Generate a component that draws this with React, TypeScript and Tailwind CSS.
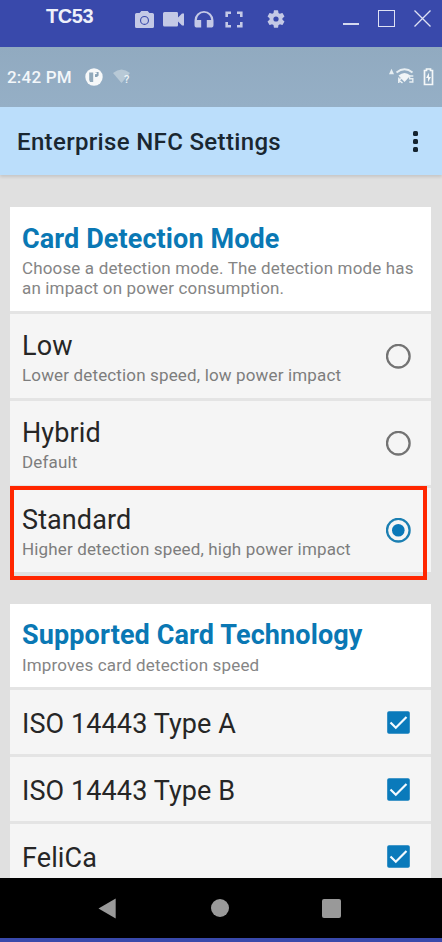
import React from "react";

const ROBOTO = "font-['Roboto','Liberation_Sans',sans-serif]";

function TitleBar() {
  return (
    <header className="flex h-[47px] shrink-0 items-start bg-[#3949ab] text-[#c4c9e6]">
      <h1 className="ml-[46px] mt-[4px] w-[89px] font-['Liberation_Sans',Arial,sans-serif] text-[20px] font-bold leading-[24px] tracking-[-0.4px] text-[#eef0fa]">
        TC53
      </h1>
      <svg className="mt-[11px] h-[17px] w-[19px]" viewBox="0 0 19 17" fill="currentColor">
        <path fillRule="evenodd" d="M6.3 0h6.4l1.7 2h3A1.6 1.6 0 0 1 19 3.600v11.800a1.600 1.600 0 0 1-1.600 1.600H1.600A1.600 1.600 0 0 1 0 15.400V3.600A1.600 1.600 0 0 1 1.600 2h3zM9.500 4.900a4.500 4.500 0 1 0 0 9a4.500 4.500 0 0 0 0-9zm0 1.100a3.400 3.400 0 1 1 0 6.800a3.400 3.400 0 0 1 0-6.800z" />
      </svg>
      <svg className="ml-[9px] mt-[12px] h-[15px] w-[21px]" viewBox="0 0 21 15" fill="currentColor">
        <path d="M1.500 0h12.200Q15 0 15 1.400v4L19 1.400h2v12.200h-2L15 9.600v3.600q0 1.300-1.300 1.300H1.500Q0 14.500 0 13V1.500Q0 0 1.500 0z" />
      </svg>
      <svg className="ml-[10px] mt-[11px] h-[17px] w-[20px]" viewBox="0 0 20 17" fill="currentColor">
        <path d="M10 0a9.500 9.500 0 0 0-9.500 9.500v4.400A2.700 2.700 0 0 0 3.200 16.600h4V9H2.800a7.200 7.200 0 0 1 14.400 0h-4.400v7.600h4a2.700 2.700 0 0 0 2.700-2.700V9.500A9.500 9.500 0 0 0 10 0z" />
      </svg>
      <svg className="ml-[11px] mt-[11px] h-[17px] w-[18px]" viewBox="0 0 18 17" fill="none" stroke="currentColor" strokeWidth="2.6">
        <path d="M1.700 6V1.700H6M12 1.700h4.300V6M16.300 11v4.300H12M6 15.300H1.700V11" />
      </svg>
      <svg className="ml-[24px] mt-[10px] h-[18px] w-[18px]" viewBox="2.200 2 19.600 20" fill="currentColor">
        <path d="M19.140 12.940c.040-.3.060-.61.060-.94 0-.32-.020-.64-.070-.94l2.030-1.580a.49.49 0 0 0 .12-.61l-1.920-3.320a.488.488 0 0 0-.59-.22l-2.390.96c-.5-.38-1.030-.7-1.620-.94l-.36-2.540a.484.484 0 0 0-.48-.41h-3.840c-.24 0-.43.17-.47.41l-.36 2.540c-.59.24-1.130.57-1.620.94l-2.390-.96c-.22-.080-.47 0-.59.22L2.740 8.870c-.12.21-.080.47.12.61l2.030 1.580c-.050.3-.090.63-.090.94s.020.64.070.94l-2.030 1.580a.49.49 0 0 0-.12.61l1.920 3.320c.12.22.37.29.59.22l2.390-.96c.5.38 1.030.7 1.620.94l.36 2.540c.050.24.24.41.48.41h3.840c.24 0 .44-.17.47-.41l.36-2.540c.59-.24 1.130-.56 1.620-.94l2.390.96c.22.080.47 0 .59-.22l1.920-3.320c.12-.22.070-.47-.12-.61l-2.010-1.580zM12 14.900a2.900 2.900 0 1 1 0-5.800a2.900 2.900 0 0 1 0 5.800z" />
      </svg>
      <div className="ml-[58px] mt-[23px] h-[2px] w-[16px] bg-[#d5d9ef]" />
      <div className="ml-[19px] mt-[10px] h-[17px] w-[17px] border border-[#dfe2f4]" />
      <svg className="ml-[19px] mt-[10px] h-[17px] w-[17px]" viewBox="0 0 17 17" stroke="#dfe2f4" strokeWidth="1.300">
        <path d="M.500.500l16 16M16.500.500l-16 16" />
      </svg>
    </header>
  );
}

function StatusBar() {
  return (
    <div className="flex h-[60px] shrink-0 items-start bg-linear-to-b from-[#91aac0] to-[#95afc6] text-[#f3f7fa]">
      <span className="ml-[7px] mt-[20px] w-[78px] whitespace-nowrap text-[17px] font-medium leading-[20px] tracking-[0.2px]">2:42 PM</span>
      <svg className="mt-[21px] h-[18px] w-[18px]" viewBox="0 0 18 18">
        <circle cx="9" cy="9" r="8.700" fill="#f6f8f9" />
        <path d="M4.200 4.500h4v9.500h-3.200l-.8-2z" fill="#91a9bb" />
        <path d="M10 4h3.600v3.500L12 9h-2z" fill="#8ba4b7" />
        <circle cx="10.800" cy="5.200" r="1" fill="#fff" />
      </svg>
      <svg className="ml-[10px] mt-[22px] h-[16px] w-[18px]" viewBox="0 0 18 16">
        <path d="M0 4Q8.500-3 17 4L8.500 14z" fill="#b8c9d6" />
        <text x="11" y="14" fontSize="11" fontWeight="500" fill="#eef4f7">?</text>
      </svg>
      <svg className="ml-[256px] mt-[21px] h-[18px] w-[29px]" viewBox="0 0 29 18">
        <path d="M2 6.300L4.500.800L7 6.300z" fill="#e7eef2" />
        <path d="M9.500 4.500Q17.500-2 25.500 4.500" fill="none" stroke="#e7eef2" strokeWidth="1.800" />
        <path d="M11.500 7.500Q17.500 2.500 23.500 7.500L17.500 14z" fill="#f1f5f7" />
        <path d="M11.800 9.500v5.500M15.500 9.500l-3.500 2.700 3.500 2.800" fill="none" stroke="#eef3f6" strokeWidth="1.400" />
        <path d="M26.300 8h-3.700v2.700h3.200v3.300h-3.500" fill="none" stroke="#e7eef2" strokeWidth="1.400" />
      </svg>
      <svg className="ml-[7px] mt-[21px] h-[18px] w-[11px]" viewBox="0 0 11 18">
        <path d="M3.500 1h4v1.500h2v14h-8v-14h2z" fill="none" stroke="#f4f7f8" strokeWidth="1.700" />
        <path d="M6 4.800L3 10h2v4l3-5H6z" fill="#f4f7f8" />
      </svg>
    </div>
  );
}

function AppBar() {
  return (
    <div className="flex h-[68px] shrink-0 items-start justify-between bg-[#bbdefb] pl-[17px] pr-[24px] shadow-[0_2px_3px_rgba(0,0,0,0.12)]">
      <h2 className="mt-[20px] whitespace-nowrap text-[24px] font-medium leading-[30px] tracking-[0.34px] text-[#1a2731]">Enterprise NFC Settings</h2>
      <div className="mt-[24px] flex flex-col gap-[3px]">
        <i className="block size-[5px] rounded-[1.500px] bg-[#14232f]" />
        <i className="block size-[5px] rounded-[1.500px] bg-[#14232f]" />
        <i className="block size-[5px] rounded-[1.500px] bg-[#14232f]" />
      </div>
    </div>
  );
}

function Radio({ checked }: { checked?: boolean }) {
  return (
    <svg className="mr-[20px] size-[25px] shrink-0" viewBox="0 0 25 25">
      <circle cx="12.300" cy="12.200" r="11.300" fill="none" stroke={checked ? "#1b7fb2" : "#737373"} strokeWidth="2.300" />
      {checked && <circle cx="12.300" cy="12.200" r="6.300" fill="#0a78b8" />}
    </svg>
  );
}

function ModeRow({ title, note, checked }: { title: string; note: string; checked?: boolean }) {
  return (
    <div className="flex h-[84px] shrink-0 items-center justify-between bg-[#f5f5f5] pl-[12px]">
      <div className="h-full whitespace-nowrap pt-[17px]">
        <div className="text-[27px] leading-[30px] tracking-[0.1px] text-[#262626]">{title}</div>
        <div className="mt-[4px] text-[17px] leading-[20px] tracking-[0.15px] text-[#7d7d7d]">{note}</div>
      </div>
      <Radio checked={checked} />
    </div>
  );
}

function TechRow({ title }: { title: string }) {
  return (
    <div className="flex h-[64px] shrink-0 items-center justify-between bg-[#f5f5f5] pl-[12px]">
      <div className="h-full whitespace-nowrap pt-[19px] text-[27px] leading-[30px] tracking-[0.1px] text-[#262626]">{title}</div>
      <svg className="mr-[21px] size-[23px]" viewBox="0 0 23 23">
        <rect x="0.200" y="0.200" width="22.600" height="22.600" rx="1.800" fill="#0a7abb" />
        <path d="M3.500 11.500l5.300 5.200L19.500 6" fill="none" stroke="#f3faff" strokeWidth="2.200" />
      </svg>
    </div>
  );
}

export default function App() {
  return (
    <div className={`flex h-[942px] w-[442px] flex-col overflow-hidden ${ROBOTO}`}>
      <TitleBar />
      <StatusBar />
      <main className="relative flex h-[771px] shrink-0 flex-col overflow-hidden bg-[#e0e0e0]">
        <AppBar />
        <section className="ml-[10px] mt-[32px] flex w-[421px] shrink-0 flex-col gap-[3px] bg-[#e4e4e4]">
          <div className="h-[104px] whitespace-nowrap bg-white pl-[12px] pt-[17px]">
            <h3 className="text-[27px] font-bold leading-[30px] tracking-[0.1px] text-[#0a78b4]">Card Detection Mode</h3>
            <p className="mt-[4px] text-[17px] leading-[20px] tracking-[0.15px] text-[#858585]">
              Choose a detection mode. The detection mode has
              <br />
              an impact on power consumption.
            </p>
          </div>
          <ModeRow title="Low" note="Lower detection speed, low power impact" />
          <ModeRow title="Hybrid" note="Default" />
          <ModeRow title="Standard" note="Higher detection speed, high power impact" checked />
        </section>
        <section className="ml-[10px] mt-[32px] flex w-[421px] shrink-0 flex-col gap-[3px] bg-[#e4e4e4]">
          <div className="h-[83px] whitespace-nowrap bg-white pl-[12px] pt-[16px]">
            <h3 className="text-[27px] font-bold leading-[30px] tracking-[0.12px] text-[#0a78b4]">Supported Card Technology</h3>
            <p className="mt-[5px] text-[17px] leading-[20px] tracking-[0.15px] text-[#858585]">Improves card detection speed</p>
          </div>
          <TechRow title="ISO 14443 Type A" />
          <TechRow title="ISO 14443 Type B" />
          <TechRow title="FeliCa" />
        </section>
        <div className="absolute left-[10px] top-[379px] h-[94px] w-[417px] border-4 border-[#ff2600]" />
      </main>
      <nav className="flex h-[60px] shrink-0 items-center bg-black">
        <svg className="ml-[98px] h-[21px] w-[18px]" viewBox="0 0 18 21">
          <path d="M17.700.500v20L.500 10.500z" fill="#999" />
        </svg>
        <div className="ml-[95px] size-[18px] rounded-full bg-[#999]" />
        <div className="ml-[93px] size-[19px] rounded-[2px] bg-[#999]" />
      </nav>
      <div className="h-[4px] shrink-0 bg-[#3949ab]" />
    </div>
  );
}
